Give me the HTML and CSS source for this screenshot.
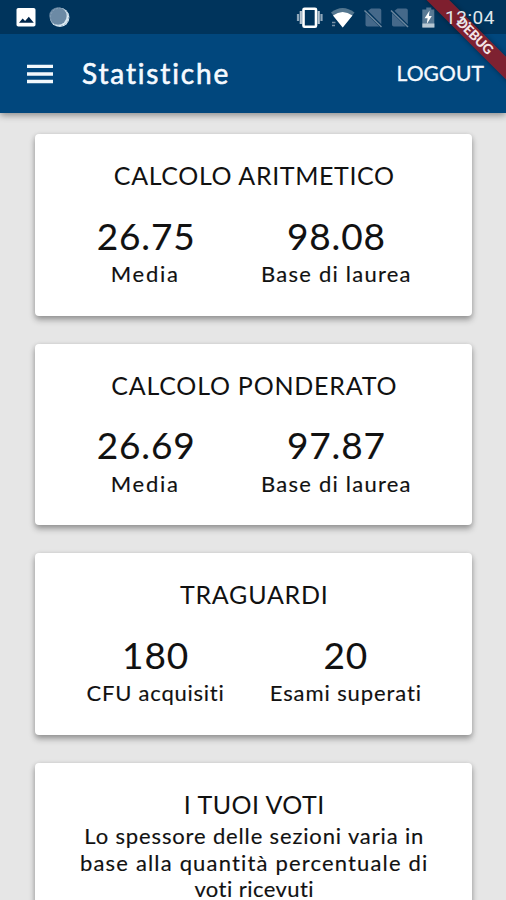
FILE: index.html
```
<!DOCTYPE html>
<html lang="it">
<head>
<meta charset="utf-8">
<title>Statistiche</title>
<link rel="stylesheet" href="styles.css">
</head>
<body>
<div class="screen">
  <header class="header">
    <div class="status">
      <svg class="status-left" width="60" height="34" viewBox="0 0 60 34">
        <rect x="6.500" y="8" width="19" height="18.500" rx="1.800" fill="#fff"/>
        <path d="M9 22.800l3.600-4.300 2.500 2.500 3.700-4.300 5 6.100z" fill="#00264a"/>
        <circle cx="49.700" cy="17.400" r="9.700" fill="#dceaf3"/>
        <circle cx="48" cy="16" r="8.700" fill="#6c8aa5"/>
        <circle cx="49.500" cy="17.200" r="9" fill="none" stroke="#8ba5ba" stroke-width=".8" stroke-dasharray="2 1.500"/>
      </svg>
      <div class="status-right">
        <svg width="140" height="34" viewBox="297 0 140 34">
          <path d="M299 14v7M322.500 14v7" stroke="#8fa7ba" stroke-width="2.200"/>
          <path d="M301.800 11v13M319.700 11v13" stroke="#b5c5d2" stroke-width="2.200"/>
          <rect x="304.500" y="8.700" width="12.500" height="18" rx="1" fill="none" stroke="#fff" stroke-width="2.600"/>
          <path d="M332 12.500Q343.500 3.500 355.500 12.500L343.700 27.500z" fill="#54768f"/>
          <path d="M334 15.500Q343.500 8.500 353.500 15.500L343.700 27.500z" fill="#fff"/>
          <path d="M333 22.500h3.500M333 25.500h3" stroke="#7791a6" stroke-width="1.300"/>
          <g id="sim">
            <path d="M372 8.500h8.500a1.800 1.800 0 0 1 1.800 1.800v14L369 10.800zM366.500 13l13.800 13.500h-12a1.800 1.800 0 0 1-1.800-1.800z" fill="#45698a"/>
            <path d="M365.500 10.500l17 16.500" stroke="#6c879e" stroke-width="1.500"/>
          </g>
          <use href="#sim" x="26.500"/>
          <path d="M427.300 7.500h5v2h3v18h-12v-18h4z" fill="#597a95"/>
          <path d="M423.400 23.500h12v4h-12z" fill="#b7c7d3"/>
          <path d="M430.600 10.500l-5 7.700h3l-.8 5.800 5-8h-2.900z" fill="#fff"/>
        </svg>
        <span class="clock">13:04</span>
      </div>
    </div>
    <div class="appbar">
      <svg class="menu" width="26" height="20" viewBox="0 0 26 20"><path d="M0 2.400h26M0 10h26M0 17.500h26" stroke="#f2f8fc" stroke-width="3.400"/></svg>
      <h1 class="heading">Statistiche</h1>
      <span class="logout">LOGOUT</span>
    </div>
    <div class="ribbon-clip"><div class="ribbon">DEBUG</div></div>
  </header>
  <main class="cards">
    <section class="card">
      <h2 class="title title-arithmetic">CALCOLO ARITMETICO</h2>
      <div class="stats">
        <div class="stat"><div class="value">26.75</div><div class="label label-average">Media</div></div>
        <div class="stat"><div class="value">98.08</div><div class="label label-base">Base di laurea</div></div>
      </div>
    </section>
    <section class="card">
      <h2 class="title title-weighted">CALCOLO PONDERATO</h2>
      <div class="stats">
        <div class="stat"><div class="value">26.69</div><div class="label label-average">Media</div></div>
        <div class="stat"><div class="value">97.87</div><div class="label label-base">Base di laurea</div></div>
      </div>
    </section>
    <section class="card">
      <h2 class="title title-goals">TRAGUARDI</h2>
      <div class="stats">
        <div class="stat"><div class="value">180</div><div class="label label-credits">CFU acquisiti</div></div>
        <div class="stat"><div class="value">20</div><div class="label label-exams">Esami superati</div></div>
      </div>
    </section>
    <section class="card">
      <h2 class="title title-grades">I TUOI VOTI</h2>
      <p class="note"><span class="line-a">Lo spessore delle sezioni varia in</span><br><span class="line-b">base alla quantità percentuale di</span><br><span class="line-c">voti ricevuti</span></p>
    </section>
  </main>
</div>
</body>
</html>
```
FILE: styles.css
```
* { box-sizing: border-box; margin: 0; }
body { font-family: Lato, sans-serif; background: #e6e6e6; color: #111; }
.screen { height: 900px; overflow: hidden; }
.header { position: relative; height: 113px; background: #01477d; box-shadow: 0 2px 7px rgba(0, 0, 0, .42); }
.status { display: flex; justify-content: space-between; height: 34px; padding: 0 11px 0 10px; background: #00345c; }
.status-right { display: flex; gap: 9px; }
.clock { position: relative; z-index: 2; font: 400 19px/35px Roboto, sans-serif; letter-spacing: .55px; color: #dfe7ed; }
.appbar { display: flex; align-items: center; height: 79px; padding: 0 22px 0 27px; color: #f5faff; }
.menu { display: block; }
.heading { margin: -2px 0 0 29px; font-size: 28px; line-height: 34px; font-weight: 400; letter-spacing: 1.85px; -webkit-text-stroke: .6px #f5faff; }
.logout { margin: -2px 0 0 auto; font-size: 21px; line-height: 28px; letter-spacing: .1px; -webkit-text-stroke: .35px #f5faff; }
.ribbon-clip { position: absolute; z-index: 1; top: 0; right: 0; width: 90px; height: 90px; overflow: hidden; }
.ribbon { position: absolute; top: 31.500px; left: -3px; width: 130px; height: 15.500px; padding-right: 10px; transform: rotate(45deg); background: rgba(136, 30, 43, .93); box-shadow: 0 0 5px rgba(0, 0, 0, .4); color: #f4e4e6; font: 900 13.500px/15.500px Lato, sans-serif; letter-spacing: -.3px; text-align: center; }
.cards { display: flex; flex-direction: column; gap: 28px; padding: 21px 34.500px 0 35px; }
.card { height: 181.500px; flex: none; padding: 26px 27px 0 29px; background: #fff; border-radius: 4px; box-shadow: 0 4px 6px rgba(0, 0, 0, .3), 0 1px 5px rgba(0, 0, 0, .13); text-align: center; }
.title { font-size: 25px; line-height: 30px; font-weight: 400; }
.title-arithmetic { letter-spacing: .62px; }
.title-weighted { letter-spacing: .77px; }
.title-goals { letter-spacing: .78px; }
.title-grades { letter-spacing: .46px; }
.stats { display: flex; justify-content: space-around; margin-top: 23.500px; }
.value { font-size: 37px; line-height: 44px; letter-spacing: .85px; -webkit-text-stroke: .1px #111; }
.label { margin-top: 3.500px; font-size: 22px; line-height: 26.600px; -webkit-text-stroke: .15px #111; }
.label-average { width: 97px; letter-spacing: 1.7px; }
.label-base { letter-spacing: 1.24px; }
.label-credits { letter-spacing: .76px; }
.label-exams { letter-spacing: .9px; }
.note { margin-top: 4.800px; font-size: 22px; line-height: 26.600px; white-space: nowrap; -webkit-text-stroke: .15px #111; }
.line-a { letter-spacing: .85px; }
.line-b { letter-spacing: 1.17px; }
.line-c { letter-spacing: .45px; }
```
